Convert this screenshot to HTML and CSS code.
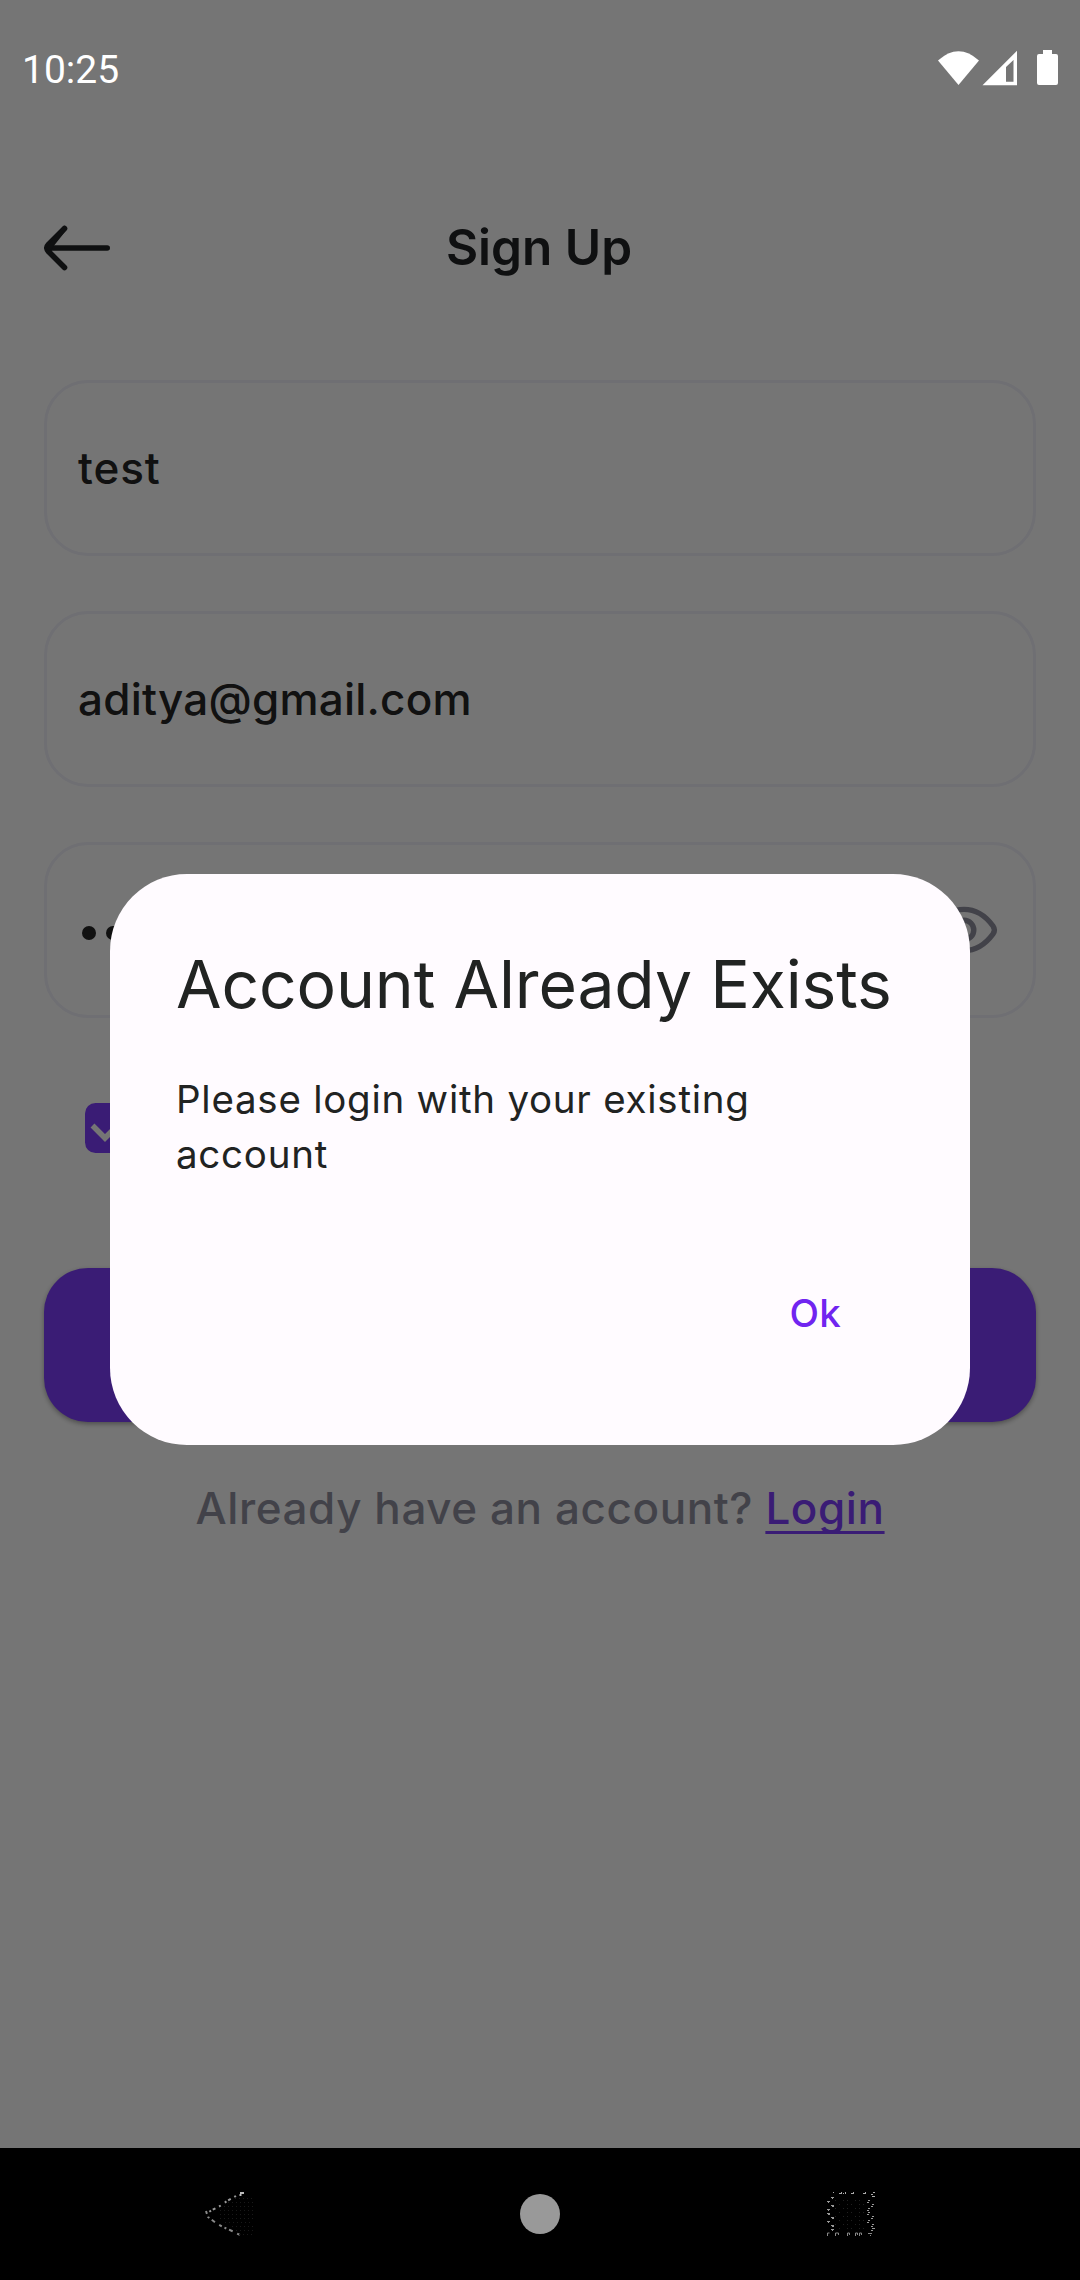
FILE: index.html
```html
<!DOCTYPE html>
<html lang="en">
<head>
<meta charset="utf-8">
<title>Sign Up</title>
<link rel="stylesheet" href="styles.css">
</head>
<body>
<div class="screen">
  <main class="page">
    <header class="header">
      <svg class="back" width="68" height="48" viewBox="0 0 68 48" fill="none" stroke="#212325" stroke-width="5.6" stroke-linecap="round" stroke-linejoin="round"><path d="M63.200 24H6M20.500 4.500L4.500 20.500Q1.300 24 4.500 27.500L20.500 43.500"/><path d="M20.500 4.500L5 24" stroke-width="5"/></svg>
      <h1 class="title">Sign Up</h1>
    </header>
    <form class="form">
      <div class="field">test</div>
      <div class="field field-email">aditya@gmail.com</div>
      <div class="field">
        <span class="dots"><i></i><i></i><i></i><i></i><i></i><i></i></span>
        <svg class="eye" width="72" height="56" viewBox="0 0 72 56" fill="none" stroke="#91919f" stroke-width="5.4"><path d="M36 7.400C51 7.400 59.500 16.500 65 24Q67.800 28 65 32C59.500 39.500 51 48.600 36 48.600S12.500 39.500 7 32Q4.200 28 7 24C12.500 16.500 21 7.400 36 7.400Z"/><circle cx="36" cy="28" r="9.800"/></svg>
      </div>
    </form>
    <div class="agree">
      <svg width="50" height="50" viewBox="0 0 50 50"><rect width="50" height="50" rx="10.500" fill="#7f3dff"/><path d="M7.500 22.500L20 35L43 12" fill="none" stroke="#fff" stroke-width="5.500"/></svg>
    </div>
    <div class="submit"></div>
    <p class="prompt">Already have an account? <a class="login">Login</a></p>
  </main>
  <div class="scrim"></div>
  <div class="status">
    <span>10:25</span>
    <svg width="124" height="40" viewBox="0 0 124 40" fill="#fff"><path d="M2 12.500Q22.500-6 43 12.500L22.500 37Z"/><path fill-rule="evenodd" d="M46.500 37.300L81 2.800V37.300ZM70 33.800H77.500V12L70 19Z"/><path d="M107 2h9v4h4q2 0 2 2v27q0 2-2 2h-17q-2 0-2-2V8q0-2 2-2h4Z"/></svg>
  </div>
  <section class="dialog">
    <h2 class="dialog-title">Account Already Exists</h2>
    <p class="dialog-text">Please login with your existing account</p>
    <div class="actions"><span class="ok">Ok</span></div>
  </section>
  <nav class="nav">
    <svg class="nav-icon" width="60" height="60" viewBox="0 0 60 60" fill="none" stroke-width="2"><path stroke="#999" stroke-dasharray="2 4 3 2 2 5" d="M40 12L31 17L24 22L16 26L10 30"/><path stroke="#888" stroke-dasharray="3 3 2 3 4 5" d="M10 27L12 33L20 39L27 43L36 47L44 51"/><path stroke="#bbb" d="M44 9h4M44.500 10v2" /><path stroke="#191919" stroke-width="1" stroke-dasharray="1 3" d="M39 14.500H58M32 18.500H57M28 22.500H57M24 26.500H57M24 30.500H57M24 34.500H57M29 38.500H57M36 42.500H57M40 46.500H57M43 50.500H57"/></svg>
    <svg class="nav-icon" width="60" height="60" viewBox="0 0 60 60"><circle cx="30" cy="30" r="20" fill="#999"/></svg>
    <svg class="nav-icon" width="60" height="60" viewBox="0 0 60 60" fill="none" stroke-width="1"><path stroke="#aaa" d="M11.500 8v1M17 9.500h2M19.500 8v2M21.500 9v1M23.500 8v2M29 9.500h2M31.500 8v2M41 9.500h2M43.500 8v2M51 8.500h2M49 10.500h2M50 12.500h3"/><path stroke="#999" d="M9 13.500h3M10 14.500h1M5 17.500h3M6 18.500h1M9 21.500h3M10 22.500h2M5 25.500h3M6 26.500h1M5 29.500h3M6 30.500h2M9 33.500h3M10 34.500h2M5 37.500h3M6 38.500h1M9 41.500h3M10 42.500h2M9 45.500h3M10 46.500h1M46 16.500h2M45 18.500h2M50 20.500h2M49 22.500h2M46 24.500h2M45 26.500h2M46 28.500h2M45 30.500h2M50 32.500h2M49 34.500h2M46 36.500h2M45 38.500h2M50 40.500h2M49 42.500h2M50 44.500h3M49 46.500h2"/><path stroke="#888" d="M5.500 52v-3h2M13.500 52v-3h3v2M25.500 52v-3h2v2M33.500 52v-3h2v2M37.500 52v-3h2v2M46 49.500h4M48 51.500h1"/><path stroke="#202020" stroke-dasharray="1 7 1 3" d="M13 16.500H44M17 20.500H44M13 24.500H44M17 28.500H44M13 32.500H44M17 36.500H44M13 40.500H44M17 44.500H44"/></svg>
  </nav>
</div>
</body>
</html>
```
FILE: styles.css
```css
* { box-sizing: border-box; }
body { margin: 0; font-family: Inter, sans-serif; background: #fff; }
h1, h2, p { margin: 0; font-weight: inherit; }
svg { display: block; flex: none; }

.screen {
  position: relative;
  width: 1080px;
  height: 2280px;
  overflow: hidden;
  display: flex;
  flex-direction: column;
}
.page { flex: 1; padding: 164px 44px 0; color: #212325; }
.header {
  height: 166px;
  display: grid;
  grid-template-columns: 68px 1fr 68px;
  align-items: center;
}
.back { margin-top: 1px; }
.title { margin: -1px 0 0 -2px; text-align: center; font-size: 49.5px; font-weight: 600; line-height: 60px; }

.form { display: flex; flex-direction: column; gap: 55px; padding-top: 50px; }
.field {
  height: 176px;
  border: 3px solid #f1f1fa;
  border-radius: 44px;
  padding: 0 30px 0 31px;
  display: flex;
  align-items: center;
  justify-content: space-between;
  color: #252525;
  font-size: 44px;
  font-weight: 500;
  letter-spacing: .9px;
}
.field-email { letter-spacing: .22px; }
.dots { display: flex; gap: 10px; padding: 6px 0 0 4px; }
.dots i { width: 14px; height: 14px; border-radius: 50%; background: #252525; }
.eye { margin: 0 3px 0 0; }

.agree { padding: 85px 41px 0; height: 250px; }
.submit {
  height: 154px;
  border-radius: 44px;
  background: #7f3dff;
  box-shadow: 0 2px 5px rgba(0, 0, 0, .35);
}
.prompt {
  margin-top: 59px;
  text-align: center;
  font-size: 44px;
  line-height: 55px;
  font-weight: 500;
  letter-spacing: .58px;
  color: #91919f;
}
.login {
  color: #7f3dff;
  text-decoration: underline;
  text-decoration-thickness: 3px;
  text-underline-offset: 7px;
  text-decoration-skip-ink: none;
}

.scrim { position: absolute; inset: 0; background: rgba(0, 0, 0, .54); }

.status {
  position: absolute;
  inset: 0 0 auto;
  height: 138px;
  padding: 0 20px 0 22px;
  display: flex;
  align-items: center;
  justify-content: space-between;
  color: #fff;
  font: 400 39px/46px Roboto, sans-serif;
}
.status span { padding-top: 1px; }
.status svg { margin-top: -3px; }
.dialog {
  position: absolute;
  left: 110px;
  top: 874px;
  width: 860px;
  height: 571px;
  border-radius: 77px;
  background: #fffbff;
  padding: 66px;
  color: #212322;
}
.dialog-title { font-size: 66px; line-height: 88px; letter-spacing: -.14px; white-space: nowrap; }
.dialog-text {
  margin-top: 44px;
  font-size: 38.5px;
  line-height: 55px;
  letter-spacing: .75px;
}
.actions {
  display: flex;
  justify-content: flex-end;
  margin-top: 104px;
  padding-right: 63px;
}
.ok { font-size: 38.5px; font-weight: 500; line-height: 55px; color: #7024f0; letter-spacing: .275px; }

.nav {
  position: relative;
  height: 132px;
  background: #000;
  display: grid;
  grid-template-columns: 60px 1fr 60px;
  align-items: center;
  justify-items: center;
  padding: 0 198px 0 196px;
}
.nav-icon:nth-child(2) { margin-left: 2px; }
```
